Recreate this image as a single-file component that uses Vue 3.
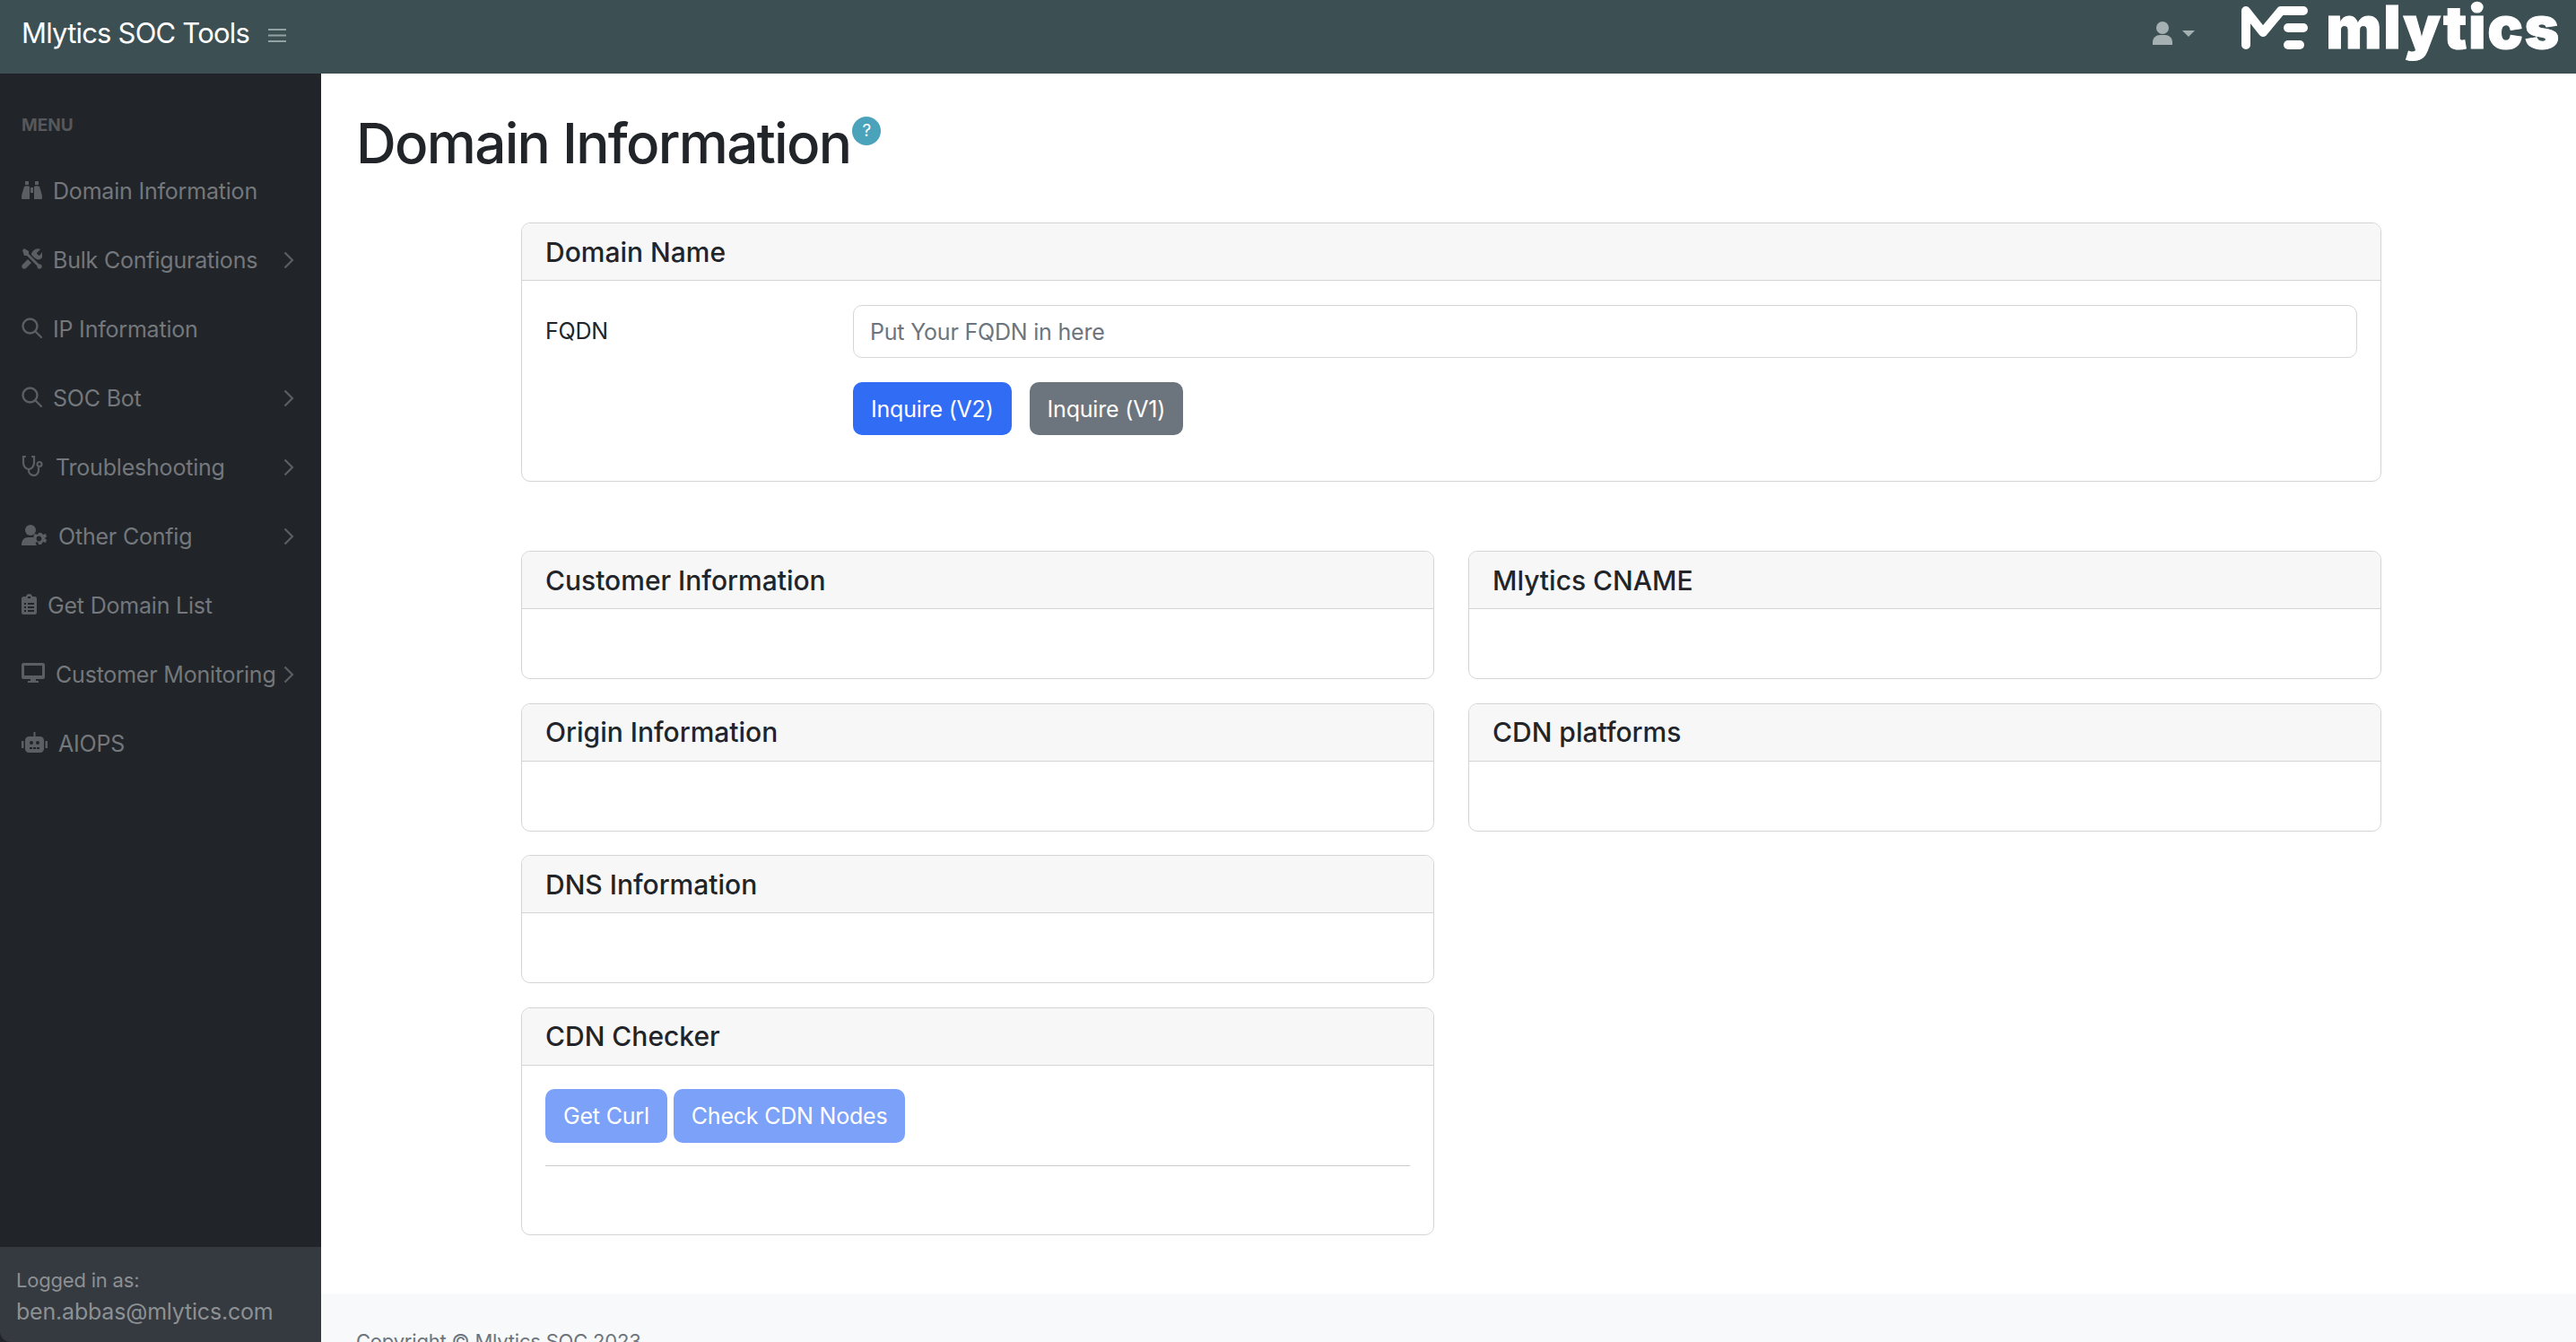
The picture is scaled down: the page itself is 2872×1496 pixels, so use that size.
<script setup>
const menu = [
  { label: "Domain Information", icon: "binoculars", w: 23 },
  { label: "Bulk Configurations", icon: "tools", w: 23, more: true },
  { label: "IP Information", icon: "search", w: 23 },
  { label: "SOC Bot", icon: "search", w: 23, more: true },
  { label: "Troubleshooting", icon: "stethoscope", w: 26, more: true },
  { label: "Other Config", icon: "usergear", w: 29, more: true },
  { label: "Get Domain List", icon: "clipboard", w: 17 },
  { label: "Customer Monitoring", icon: "desktop", w: 26, more: true },
  { label: "AIOPS", icon: "robot", w: 29 },
];

const leftCards = ["Customer Information", "Origin Information", "DNS Information"];
const rightCards = ["Mlytics CNAME", "CDN platforms"];
</script>

<template>
  <div class="page">
    <header class="topbar">
      <span class="brand">Mlytics SOC Tools</span>
      <svg class="burger" viewBox="0 0 20 16" width="20" height="16">
        <path d="M0 2h20M0 8.500h20M0 15h20" stroke="currentColor" stroke-width="2.200" fill="none" />
      </svg>
      <div class="user">
        <svg viewBox="0 0 22 26" width="22" height="26" fill="currentColor">
          <circle cx="11" cy="7" r="7" />
          <path d="M0 26v-3c0-5 4-8 8-8h6c4 0 8 3 8 8v3z" />
        </svg>
        <svg viewBox="0 0 14 7" width="14" height="7" fill="currentColor"><path d="M0 0h14L7 7z" /></svg>
      </div>
      <div class="logo">
        <svg viewBox="0 0 74 49" width="74" height="49" fill="none" stroke="#fff" stroke-width="10" stroke-linecap="round" stroke-linejoin="round">
          <path d="M5 44V6L24 30 44 6H69" />
          <path d="M52 25H69" />
          <path d="M52 44H65" />
        </svg>
        <span class="wordmark">mlytics</span>
      </div>
    </header>

    <div class="shell">
      <aside class="sidebar">
        <nav class="nav">
          <div class="nav-heading">MENU</div>
          <a v-for="item in menu" :key="item.label" class="nav-link">
            <span class="nav-icon" :style="{ width: item.w + 'px' }">
              <svg v-if="item.icon === 'binoculars'" viewBox="0 0 23 20" width="23" height="20" fill="currentColor">
                <path d="M3 6c1-1 5-1 6 0v14H1c-1 0-1-1-1-2 0-4 2-8 3-12zM14 6c1-1 5-1 6 0 1 4 3 8 3 12 0 1 0 2-1 2h-8zM4 0h4v4H4zM15 0h4v4h-4zM10 7h3v6h-3z" />
              </svg>
              <svg v-else-if="item.icon === 'tools'" viewBox="0 0 23 23" width="23" height="23" fill="currentColor">
                <path d="M1 2l2-2 5 3v3l11 11 3 1c1 1 1 3 0 4s-3 1-4 0l-1-3L6 8H3zM15 1c2-1 5-1 6 0l-4 4 1 2 2 1 3-4c1 2 1 5-1 7-1 1-3 2-5 1l-2-1-4-4c0-2 1-4 4-6zM7 12l4 4-6 6c-1 1-3 1-4 0s-1-3 0-4z" />
              </svg>
              <svg v-else-if="item.icon === 'search'" viewBox="0 0 23 23" width="23" height="23" fill="none" stroke="currentColor" stroke-width="2.400">
                <circle cx="9.500" cy="9.500" r="8" />
                <path d="M15 15l7 7" stroke-linecap="round" />
              </svg>
              <svg v-else-if="item.icon === 'stethoscope'" viewBox="0 0 24 23" width="24" height="23" fill="none" stroke="currentColor" stroke-width="2.200">
                <path d="M4 1H2v7c0 4 3 7 6 7s6-3 6-7V1h-2" stroke-linecap="round" />
                <path d="M8 15v2c0 3 3 5 6 5s5-3 5-6v-3" />
                <circle cx="20" cy="9.500" r="2.500" />
              </svg>
              <svg v-else-if="item.icon === 'usergear'" viewBox="0 0 29 23" width="29" height="23" fill="currentColor">
                <circle cx="10" cy="6" r="6" />
                <path d="M0 23c0-6 3-9 7-9h6c1 0 3 0 4 1-2 2-2 6 0 8z" />
                <path d="M22 9l2 2 3-1 1 3-2 2 2 2-1 3-3-1-2 3h-3l-1-3-3 1-2-3 2-2-2-2 2-3 3 1 1-2zM21 13a3 3 0 100 5 3 3 0 000-5z" fill-rule="evenodd" />
              </svg>
              <svg v-else-if="item.icon === 'clipboard'" viewBox="0 0 17 23" width="17" height="23" fill="currentColor">
                <path fill-rule="evenodd" d="M2 3h3c0-2 2-3 3.500-3S12 1 12 3h3c1 0 2 1 2 2v16c0 1-1 2-2 2H2c-1 0-2-1-2-2V5c0-1 1-2 2-2zM3 10v2h2v-2zM7 10v2h7v-2zM3 14v2h2v-2zM7 14v2h7v-2zM3 18v2h2v-2zM7 18v2h7v-2zM7 3v2h3V3z" />
              </svg>
              <svg v-else-if="item.icon === 'desktop'" viewBox="0 0 26 22" width="26" height="22" fill="currentColor">
                <path fill-rule="evenodd" d="M2 0h22c1 0 2 1 2 2v14c0 1-1 2-2 2H2c-1 0-2-1-2-2V2c0-1 1-2 2-2zM3 3v11h20V3z" />
                <path d="M10 18h6v2h3v2H7v-2h3z" />
              </svg>
              <svg v-else viewBox="0 0 29 23" width="29" height="23" fill="currentColor">
                <path fill-rule="evenodd" d="M13.500 0h2v5H21c2 0 4 2 4 4v10c0 2-2 4-4 4H8c-2 0-4-2-4-4V9c0-2 2-4 4-4h5.500zM11 10a2 2 0 100 4 2 2 0 000-4zM18 10a2 2 0 100 4 2 2 0 000-4zM9 17v2h3v-2zM13 17v2h3v-2zM17 17v2h3v-2z" />
                <path d="M2.500 10H0v8h2.500zM26.500 10H29v8h-2.500z" />
              </svg>
            </span>
            <span class="nav-label">{{ item.label }}</span>
            <svg v-if="item.more" class="chevron" viewBox="0 0 12 20" width="12" height="20" fill="none" stroke="currentColor" stroke-width="2.200">
              <path d="M1.500 1.500L10 10l-8.500 8.500" />
            </svg>
          </a>
        </nav>
        <div class="logged">
          <div class="logged-small">Logged in as:</div>
          <div class="logged-email">ben.abbas@mlytics.com</div>
        </div>
      </aside>

      <main class="main">
        <div class="content">
          <div class="title-row">
            <h1>Domain Information</h1>
            <span class="help">?</span>
          </div>

          <div class="board">
            <section class="card domain-card">
              <div class="card-header">Domain Name</div>
              <div class="domain-body">
                <label class="fqdn-label">FQDN</label>
                <div class="fqdn-field">
                  <input class="fqdn-input" type="text" placeholder="Put Your FQDN in here" />
                  <div class="actions">
                    <button class="btn primary">Inquire (V2)</button>
                    <button class="btn grey">Inquire (V1)</button>
                  </div>
                </div>
              </div>
            </section>

            <div class="columns">
              <div class="col">
                <section v-for="name in leftCards" :key="name" class="card">
                  <div class="card-header">{{ name }}</div>
                  <div class="card-empty"></div>
                </section>
                <section class="card">
                  <div class="card-header">CDN Checker</div>
                  <div class="checker-body">
                    <div class="checker-actions">
                      <button class="btn faded">Get Curl</button>
                      <button class="btn faded">Check CDN Nodes</button>
                    </div>
                    <hr />
                  </div>
                </section>
              </div>
              <div class="col">
                <section v-for="name in rightCards" :key="name" class="card">
                  <div class="card-header">{{ name }}</div>
                  <div class="card-empty"></div>
                </section>
              </div>
            </div>
          </div>
        </div>
        <footer class="footer">Copyright © Mlytics SOC 2023</footer>
      </main>
    </div>
  </div>
</template>

<style>
html,
body {
  margin: 0;
  background: #fff;
  overflow: hidden;
}
</style>

<style scoped>
.page {
  height: 1496px;
  display: flex;
  flex-direction: column;
  overflow: hidden;
  font-family: Inter, "Liberation Sans", sans-serif;
  font-size: 25px;
  letter-spacing: -0.2px;
  color: #212529;
}

.topbar {
  flex: none;
  height: 82px;
  background: #3c5054;
  display: flex;
  align-items: center;
  padding: 0 17px 0 24px;
}

.brand {
  color: #fff;
  font-size: 31px;
  letter-spacing: -0.8px;
  margin-top: -10px;
}

.burger {
  color: #93a2a4;
  margin-left: 21px;
  margin-top: -4px;
}

.user {
  margin-left: auto;
  display: flex;
  align-items: center;
  gap: 11px;
  color: #a5b0b2;
  margin-top: -8px;
}

.logo {
  margin-left: 52px;
  display: flex;
  align-items: center;
  gap: 20px;
  margin-top: -21px;
}

.wordmark {
  color: #fff;
  font-size: 66px;
  font-weight: 900;
  line-height: 49px;
  letter-spacing: 1.600px;
  -webkit-text-stroke: 1px #fff;
}

.shell {
  flex: 1;
  display: flex;
  min-height: 0;
}

.sidebar {
  flex: none;
  width: 358px;
  background: #212529;
  display: flex;
  flex-direction: column;
}

.nav {
  flex: 1;
  padding-top: 40px;
}

.nav-heading {
  padding-left: 24px;
  color: #55585c;
  font-size: 19px;
  font-weight: 700;
  letter-spacing: 0;
  line-height: 36px;
  margin-bottom: 18px;
}

.nav-link {
  height: 76.900px;
  display: flex;
  align-items: center;
  padding: 0 30px 0 24px;
  box-sizing: border-box;
  color: #74777b;
  margin-top: -1px;
  margin-bottom: 1px;
}

.nav-icon {
  flex: none;
  display: flex;
  color: #5b5e62;
  margin-right: 12px;
  margin-top: -3px;
}

.nav-label {
  white-space: nowrap;
}

.chevron {
  margin-left: auto;
  color: #5b5e62;
}

.logged {
  flex: none;
  height: 106px;
  box-sizing: border-box;
  background: #343a40;
  border-bottom-left-radius: 12px;
  padding: 22px 18px 0;
  color: #8d9093;
}

.logged-small {
  font-size: 22px;
  line-height: 30px;
}

.logged-email {
  line-height: 40px;
}

.main {
  flex: 1;
  min-width: 0;
  display: flex;
  flex-direction: column;
}

.content {
  flex: 1;
  padding: 39px 217px 0 39px;
}

.title-row {
  display: flex;
  align-items: flex-start;
  height: 127px;
}

h1 {
  margin: 2px 0 0;
  font-size: 62px;
  font-weight: 500;
  line-height: 74px;
  letter-spacing: -1.700px;
}

.help {
  width: 32px;
  height: 32px;
  margin: 9px 0 0 2px;
  border-radius: 50%;
  background: #4aa3ba;
  color: #fff;
  font-size: 19px;
  line-height: 32px;
  text-align: center;
}

.board {
  margin-left: 184px;
}

.card {
  border: 1.500px solid #d3d4d5;
  border-radius: 10px;
  box-sizing: border-box;
  overflow: hidden;
  background: #fff;
}

.card-header {
  height: 64px;
  box-sizing: border-box;
  padding: 0 26px;
  display: flex;
  align-items: center;
  background: #f7f7f7;
  border-bottom: 1.500px solid #d3d4d5;
  font-size: 30px;
  font-weight: 500;
  letter-spacing: 0;
}

.domain-card {
  height: 289px;
  margin-bottom: 77px;
}

.domain-body {
  display: flex;
  padding: 27px 26px 0;
}

.fqdn-label {
  width: 343px;
  flex: none;
  line-height: 59px;
}

.fqdn-field {
  flex: 1;
}

.fqdn-input {
  display: block;
  width: 100%;
  height: 59px;
  box-sizing: border-box;
  border: 1.500px solid #d3d6d9;
  border-radius: 10px;
  padding: 0 18px;
  font-family: inherit;
  font-size: 25px;
  letter-spacing: -0.2px;
  color: #212529;
  outline: none;
}

.fqdn-input::placeholder {
  color: #6c757d;
  opacity: 1;
}

.actions {
  display: flex;
  gap: 20px;
  margin-top: 27px;
}

.btn {
  height: 59px;
  padding: 0 20px;
  border: none;
  border-radius: 10px;
  color: #fff;
  font-family: inherit;
  font-size: 25px;
  letter-spacing: -0.2px;
  white-space: nowrap;
}

.primary {
  background: #316cf4;
}

.grey {
  background: #6c757d;
}

.faded {
  background: #7ba1f9;
}

.columns {
  display: grid;
  grid-template-columns: 1018px 1018px;
  column-gap: 38px;
}

.col {
  display: flex;
  flex-direction: column;
  gap: 26.670px;
}

.card-empty {
  height: 77px;
}

.checker-body {
  padding: 26px 26px 0;
  height: 188px;
  box-sizing: border-box;
}

.checker-actions {
  display: flex;
  gap: 7px;
}

.checker-actions .btn {
  height: 60px;
}

hr {
  margin: 25px 0 0;
  border: none;
  border-top: 1.500px solid #c9cacb;
}

.footer {
  flex: none;
  height: 54px;
  box-sizing: border-box;
  background: #f8f9fa;
  padding: 38px 0 0 39px;
  font-size: 22px;
  line-height: 30px;
  color: #6c757d;
}
</style>
